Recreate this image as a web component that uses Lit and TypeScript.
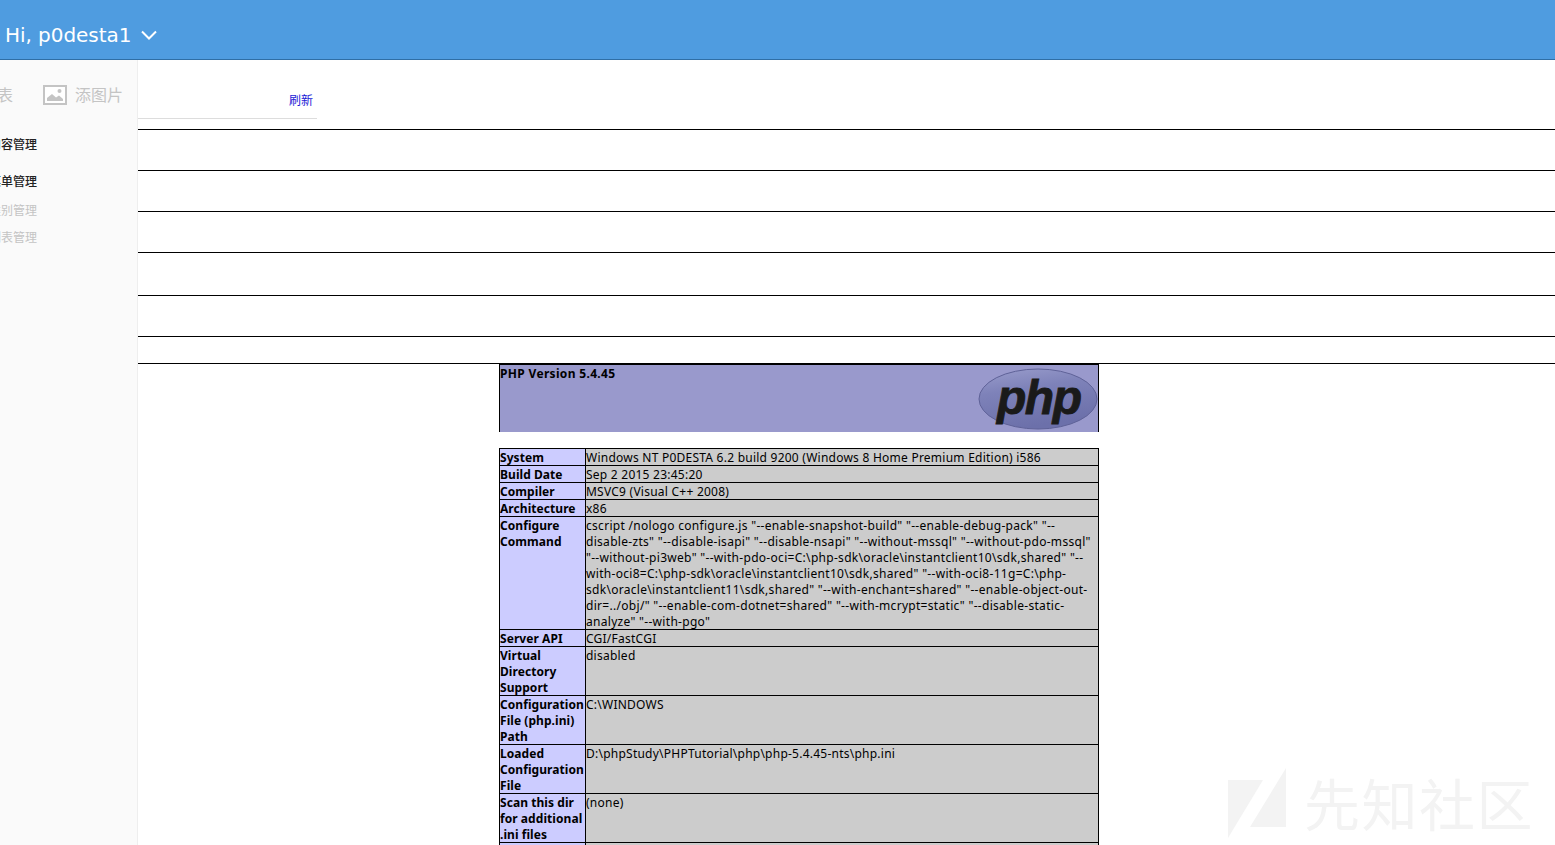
import { LitElement, html, css } from "lit";
import { customElement } from "lit/decorators.js";

const rows: [string, string][] = [
  ["System", "Windows NT P0DESTA 6.2 build 9200 (Windows 8 Home Premium Edition) i586"],
  ["Build Date", "Sep 2 2015 23:45:20"],
  ["Compiler", "MSVC9 (Visual C++ 2008)"],
  ["Architecture", "x86"],
  ["Configure<br>Command", `cscript /nologo configure.js "--enable-snapshot-build" "--enable-debug-pack" "--<br>disable-zts" "--disable-isapi" "--disable-nsapi" "--without-mssql" "--without-pdo-mssql"<br>"--without-pi3web" "--with-pdo-oci=C:\\php-sdk\\oracle\\instantclient10\\sdk,shared" "--<br>with-oci8=C:\\php-sdk\\oracle\\instantclient10\\sdk,shared" "--with-oci8-11g=C:\\php-<br>sdk\\oracle\\instantclient11\\sdk,shared" "--with-enchant=shared" "--enable-object-out-<br>dir=../obj/" "--enable-com-dotnet=shared" "--with-mcrypt=static" "--disable-static-<br>analyze" "--with-pgo"`],
  ["Server API", "CGI/FastCGI"],
  ["Virtual<br>Directory<br>Support", "disabled"],
  ["Configuration<br>File (php.ini)<br>Path", "C:\\WINDOWS"],
  ["Loaded<br>Configuration<br>File", "D:\\phpStudy\\PHPTutorial\\php\\php-5.4.45-nts\\php.ini"],
  ["Scan this dir<br>for additional<br>.ini files", "(none)"],
  ["Additional<br>.ini files", "(none)"],
];

function lines(s: string) {
  return s.split("<br>").map((l) => html`<div>${l}</div>`);
}

@customElement("app-root")
export class AppRoot extends LitElement {
  static styles = css`
    :host {
      display: block;
      height: 845px;
      overflow: hidden;
      position: relative;
      font-family: "Noto Sans", "Noto Sans CJK SC", sans-serif;
      background: #fff;
    }
    .top {
      height: 60px;
      box-sizing: border-box;
      background: #4f9ce0;
      border-bottom: 1px solid #2f6ea5;
      display: flex;
      align-items: center;
      padding-left: 5px;
      padding-top: 11px;
      gap: 10px;
      color: #fff;
      font-family: "DejaVu Sans", sans-serif;
      font-size: 20px;
    }
    .top span { letter-spacing: -0.05px; }
    .body { display: flex; height: 785px; }
    .side {
      width: 137px;
      flex: none;
      background: #fafafa;
      border-right: 1px solid #eeeeee;
      overflow: hidden;
      font-family: "Noto Sans CJK SC", sans-serif;
    }
    .tools {
      display: flex;
      justify-content: flex-end;
      align-items: center;
      white-space: nowrap;
      height: 20px;
      margin-top: 25px;
      padding-right: 14px;
      gap: 8px;
      font-size: 16px;
      line-height: 18px;
      color: #c4c4c4;
    }
    .tools span { flex: none; padding-bottom: 2px; }
    .tools svg { flex: none; }
    .tools .list { margin-right: 22px; }
    .item {
      display: flex;
      justify-content: flex-end;
      white-space: nowrap;
      padding-right: 100px;
      font-size: 12px;
      line-height: 17px;
    }
    .item span { flex: none; }
    .strong { color: #222; font-weight: 500; }
    .i1 { margin-top: 30px; }
    .i2 { margin-top: 20px; }
    .i3 { margin-top: 12px; color: #c4c4c4; }
    .i4 { margin-top: 10px; color: #c4c4c4; }
    .main { flex: 1; min-width: 0; }
    .toolbar {
      width: 179px;
      height: 59px;
      border-bottom: 1px solid #dddddd;
      display: flex;
      justify-content: flex-end;
      align-items: flex-start;
      padding-top: 31px;
      box-sizing: border-box;
      padding-right: 4px;
      font-family: "Noto Sans CJK SC", sans-serif;
      font-size: 12px;
      line-height: 18px;
      color: #1a1ad6;
    }
    .gap10 { height: 10px; }
    .rule { border-top: 1px solid #000; }
    .r40 { height: 40px; }
    .r42 { height: 42px; }
    .r26 { height: 26px; }
    .center {
      border-top: 1px solid #000;
      padding-left: 361px;
      font-size: 12px;
      line-height: 16px;
      color: #000;
    }
    .phead {
      width: 600px;
      height: 68px;
      box-sizing: border-box;
      background: #9999cc;
      border-left: 1px solid #000;
      border-right: 1px solid #000;
      border-top: 1px solid #000;
      display: flex;
      justify-content: space-between;
      font-weight: 700;
    }
    .phead > div { letter-spacing: 0.33px; transform: translateY(1px); }
    .phead svg { margin-top: 3px; flex: none; }
    .info {
      margin-top: 16px;
      width: 600px;
      border-top: 1px solid #000;
      border-left: 1px solid #000;
      border-right: 1px solid #000;
      box-sizing: border-box;
    }
    .row {
      display: grid;
      grid-template-columns: 86px 1fr;
      border-bottom: 1px solid #000;
    }
    .k {
      background: #ccccff;
      font-weight: 700;
      border-right: 1px solid #000;
      white-space: nowrap;
      overflow: hidden;
      box-sizing: border-box;
    }
    .k div { letter-spacing: 0.06px; transform: translateY(1px); }
    .v { background: #cccccc; white-space: nowrap; overflow: hidden; }
    .v div { letter-spacing: 0.24px; transform: translateY(1px); }
    .row.long .v div { letter-spacing: 0.3px; }
    .mark {
      position: absolute;
      left: 1228px;
      top: 768px;
      display: flex;
      gap: 18px;
      color: #f3f3f3;
      pointer-events: none;
    }
    .mark span {
      font-family: "Noto Sans CJK SC", sans-serif;
      font-size: 56px;
      line-height: 67px;
      letter-spacing: 1.5px;
      font-weight: 400;
    }
    .mark svg { flex: none; }
    svg text.logo {
      font-family: "Liberation Sans", sans-serif;
      font-weight: 700;
      font-style: italic;
      font-size: 48px;
      letter-spacing: -1.5px;
    }
  `;

  render() {
    return html`
      <div class="top">
        <span>Hi, p0desta1</span>
        <svg width="16" height="10" viewBox="0 0 16 10" fill="none" stroke="#fff" stroke-width="2">
          <path d="M1 1.5 L8 8.5 L15 1.5" />
        </svg>
      </div>
      <div class="body">
        <aside class="side">
          <div class="tools">
            <span class="list">列表</span>
            <svg width="24" height="20" viewBox="0 0 24 20">
              <rect x="1" y="1" width="22" height="18" fill="#fff" stroke="#c4c4c4" stroke-width="2" />
              <path d="M4 16 L4 13 L9 9 L13 12.5 L16 10.5 L20 14 L20 16 Z" fill="#c4c4c4" />
              <circle cx="16.5" cy="6" r="2" fill="#c4c4c4" />
            </svg>
            <span>添图片</span>
          </div>
          <div class="item strong i1"><span>内容管理</span></div>
          <div class="item strong i2"><span>菜单管理</span></div>
          <div class="item i3"><span>类别管理</span></div>
          <div class="item i4"><span>列表管理</span></div>
        </aside>
        <main class="main">
          <div class="toolbar"><span>刷新</span></div>
          <div class="gap10"></div>
          <div class="rule r40"></div>
          <div class="rule r40"></div>
          <div class="rule r40"></div>
          <div class="rule r42"></div>
          <div class="rule r40"></div>
          <div class="rule r26"></div>
          <div class="center">
            <div class="phead">
              <div>PHP Version 5.4.45</div>
              <svg width="120" height="62" viewBox="0 0 120 62">
                <defs>
                  <linearGradient id="g" x1="0" y1="0" x2="0.3" y2="1">
                    <stop offset="0" stop-color="#9a9dcc" />
                    <stop offset="0.4" stop-color="#7e82b9" />
                    <stop offset="1" stop-color="#6c70aa" />
                  </linearGradient>
                </defs>
                <ellipse cx="60" cy="31" rx="59" ry="30" fill="url(#g)" stroke="#5f6298" stroke-width="1" />
                <text class="logo" x="19" y="46" fill="#1a1a1a" stroke="#1a1a1a" stroke-width="0.9">php</text>
              </svg>
            </div>
            <div class="info">
              ${rows.map(
                ([k, v]) => html`<div class="row ${k.startsWith("Configure") ? "long" : ""}">
                  <div class="k">${lines(k)}</div>
                  <div class="v">${lines(v)}</div>
                </div>`
              )}
            </div>
          </div>
        </main>
      </div>
      <div class="mark">
        <svg width="58" height="72" viewBox="0 0 58 72" fill="#f3f3f3">
          <polygon points="0,12 35,12 0,70" />
          <polygon points="58,0 58,59 22,59" />
        </svg>
        <span>先知社区</span>
      </div>
    `;
  }
}
